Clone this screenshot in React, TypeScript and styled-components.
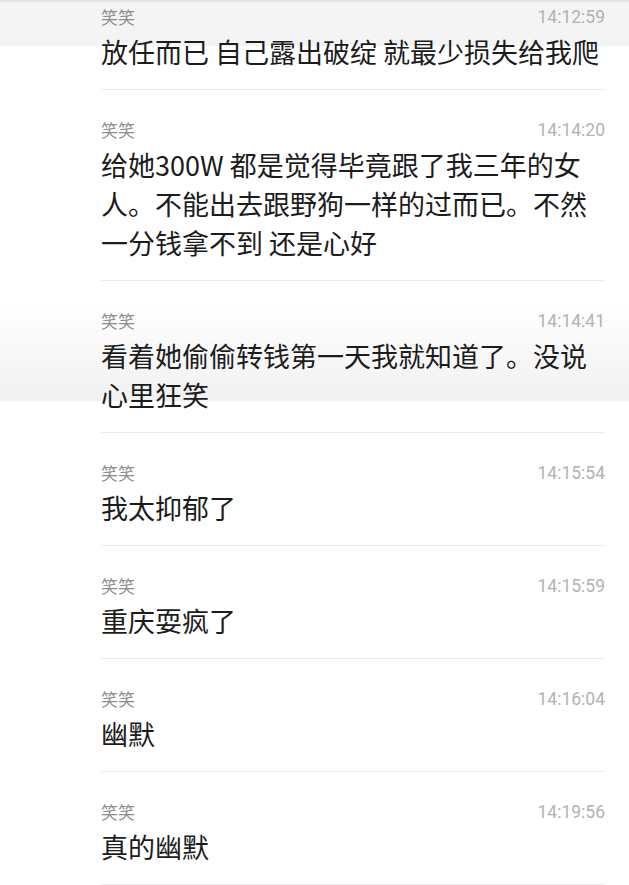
import React from 'react';
import styled, { createGlobalStyle } from 'styled-components';

type Message = {
    sender: string;
    time: string;
    text: string;
};

const messages: Message[] = [
    { sender: '笑笑', time: '14:12:59', text: '放任而已 自己露出破绽 就最少损失给我爬' },
    {
        sender: '笑笑',
        time: '14:14:20',
        text: '给她300W 都是觉得毕竟跟了我三年的女人。不能出去跟野狗一样的过而已。不然一分钱拿不到 还是心好',
    },
    { sender: '笑笑', time: '14:14:41', text: '看着她偷偷转钱第一天我就知道了。没说心里狂笑' },
    { sender: '笑笑', time: '14:15:54', text: '我太抑郁了' },
    { sender: '笑笑', time: '14:15:59', text: '重庆耍疯了' },
    { sender: '笑笑', time: '14:16:04', text: '幽默' },
    { sender: '笑笑', time: '14:19:56', text: '真的幽默' },
];

const GlobalStyle = createGlobalStyle`
    html, body {
        margin: 0;
        padding: 0;
        background: #ffffff;
    }
    body {
        font-family: 'Noto Sans CJK SC', 'Noto Sans', sans-serif;
    }
`;

export default function App() {
    return (
        <>
            <GlobalStyle />
            <Page>
                <List>
                    {messages.map((m, i) => (
                        <Item key={i}>
                            <Meta>
                                <Sender>{m.sender}</Sender>
                                <Time>{m.time}</Time>
                            </Meta>
                            <Text>{m.text}</Text>
                        </Item>
                    ))}
                </List>
            </Page>
        </>
    );
}

// the grey bands are left over from the stitched screenshots
const Page = styled.div`
    min-height: 885px;
    overflow: hidden;
    padding: 0 24px 0 101px;
    background: linear-gradient(
        to bottom,
        #e4e4e4 0,
        #e4e4e4 2px,
        #f4f4f4 2px,
        #f4f4f4 46px,
        #ffffff 46px,
        #ffffff 300px,
        #f1f1f1 401px,
        #ffffff 401px,
        #ffffff 100%
    );
`;

const List = styled.div`
    display: flex;
    flex-direction: column;
    margin-top: -23px;
`;

const Item = styled.div`
    padding: 28px 0 18px 0;
    border-bottom: 1px solid #ebebeb;
`;

const Meta = styled.div`
    display: flex;
    justify-content: space-between;
    align-items: center;
    height: 24px;
    margin-bottom: 3px;
`;

const Sender = styled.span`
    font-size: 17px;
    color: #8d8d8d;
    line-height: 24px;
`;

const Time = styled.span`
    font-family: Roboto, 'Noto Sans', sans-serif;
    font-size: 17.5px;
    color: #b2b2b2;
    line-height: 24px;
`;

const Text = styled.div`
    font-size: 27px;
    line-height: 39px;
    color: #1c1c1c;
    word-break: break-all;
`;
